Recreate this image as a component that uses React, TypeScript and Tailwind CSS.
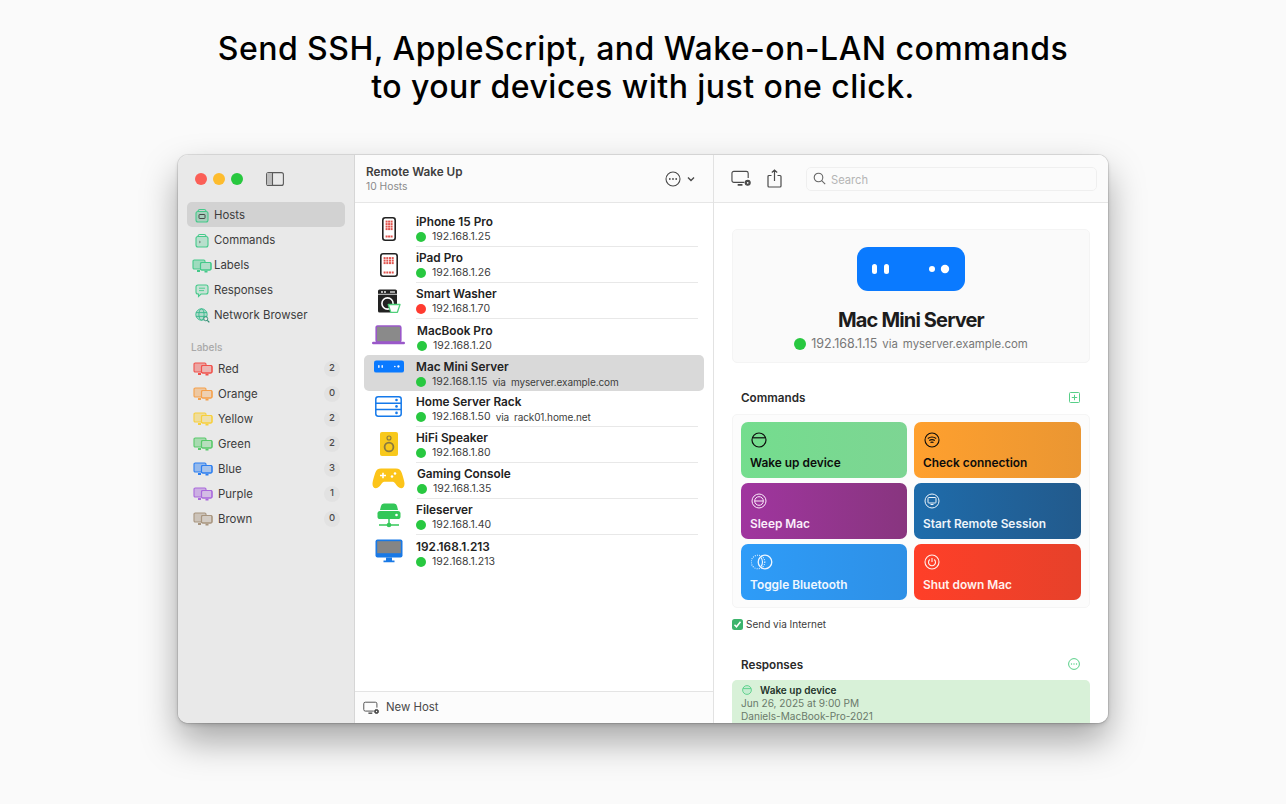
import type { ReactNode } from "react";

const font = { fontFamily: "Inter, 'Liberation Sans', sans-serif" };

function MonitorPair({ className }: { className: string }) {
  return (
    <svg viewBox="0 0 20 14" className={`w-[20px] h-[14px] ${className}`} fill="none" stroke="currentColor">
      <rect x="1" y="1" width="12" height="9" rx="1.2" fill="currentColor" fillOpacity="0.45" strokeWidth="1.1" />
      <rect x="8.5" y="3.5" width="10.5" height="7.5" rx="1.2" fill="#eaeaea" strokeWidth="1.1" />
      <rect x="8.5" y="3.5" width="10.5" height="7.5" rx="1.2" fill="currentColor" fillOpacity="0.35" strokeWidth="1.1" />
      <path d="M5 12h3M12.5 12.6h3" strokeWidth="1.8" />
    </svg>
  );
}

function HostsIcon({ inner }: { inner?: boolean }) {
  return (
    <svg viewBox="0 0 14 16" className="w-[14px] h-[16px] text-[#45c98a]" fill="none" stroke="currentColor">
      <path d="M3 3.5C3 2 4 1.5 5 1.5h4c1 0 2 .5 2 2" strokeWidth="1.1" />
      <rect x="1" y="3.5" width="12" height="10.5" rx="2" fill="currentColor" fillOpacity="0.3" strokeWidth="1.1" />
      {inner ? (
        <rect x="4" y="6.5" width="6" height="4" rx="0.6" strokeWidth="0.9" stroke="#3a3a3a" />
      ) : (
        <path d="M4 8l1.5 1L4 10" strokeWidth="0.7" stroke="#666" />
      )}
    </svg>
  );
}

function BubbleIcon() {
  return (
    <svg viewBox="0 0 14 14" className="w-[14px] h-[14px] text-[#45c98a]" fill="none" stroke="currentColor" strokeWidth="1.1">
      <path d="M3 1h8a2 2 0 012 2v5a2 2 0 01-2 2H6l-2.5 2.5V10H3a2 2 0 01-2-2V3a2 2 0 012-2z" fill="currentColor" fillOpacity="0.2" />
      <path d="M4 4.2h6M4 6.6h5" strokeWidth="0.9" />
    </svg>
  );
}

function GlobeIcon() {
  return (
    <svg viewBox="0 0 15 15" className="w-[15px] h-[15px] text-[#35b98a]" fill="none" stroke="currentColor" strokeWidth="0.9">
      <circle cx="6.5" cy="6.5" r="5.7" fill="currentColor" fillOpacity="0.3" />
      <ellipse cx="6.5" cy="6.5" rx="2.6" ry="5.7" />
      <path d="M1 4.6h11M1 8.4h11" />
      <circle cx="10.8" cy="10.8" r="2" fill="#eaeaea" stroke="#2c8c70" />
      <path d="M12.3 12.3l2 2" stroke="#2c8c70" strokeWidth="1.2" />
    </svg>
  );
}

function MonitorGear({ className }: { className: string }) {
  return (
    <svg viewBox="0 0 22 17" className={className} fill="none" stroke="#4a4a4a" strokeWidth="1.2">
      <path d="M14 12.5H3a2 2 0 01-2-2V3a2 2 0 012-2h13a2 2 0 012 2v5" />
      <path d="M7 15.2h5" strokeWidth="1.8" />
      <circle cx="17.5" cy="13" r="2.6" fill="#4a4a4a" stroke="#4a4a4a" />
      <circle cx="17.5" cy="13" r="0.9" fill="#fff" stroke="none" />
    </svg>
  );
}

function PhoneIcon({ wide }: { wide?: boolean }) {
  const w = wide ? 18 : 14;
  const cols = wide ? [4.5, 7.2, 9.9, 12.6] : [4.5, 7, 9.5];
  const rows = wide ? [5, 7.5, 10] : [4.5, 7, 9.5, 12];
  return (
    <svg viewBox={`0 0 ${w} 24`} width={w} height="24" fill="none">
      <rect x="0.8" y="0.8" width={w - 1.6} height="22.4" rx="2.4" fill="#fff" stroke="#222" strokeWidth="1.6" />
      {rows.flatMap((y) => cols.map((x) => <rect key={`${x}-${y}`} x={x - 0.9} y={y - 0.9} width="2" height="2" fill="#e2554f" />))}
      {cols.map((x) => <rect key={x} x={x - 0.9} y="18.5" width="2" height="2" fill="#e2554f" />)}
    </svg>
  );
}

function WasherIcon() {
  return (
    <svg width="24" height="25" viewBox="0 0 24 25">
      <rect x="1" y="0.5" width="19" height="23" rx="1.6" fill="#222" />
      <path d="M1 5.3h19" stroke="#fff" strokeWidth="0.8" />
      <circle cx="5" cy="3" r="0.9" fill="#fff" />
      <circle cx="8" cy="3" r="0.9" fill="#fff" />
      <path d="M13 3h5" stroke="#fff" strokeWidth="1.2" />
      <circle cx="10.5" cy="14.5" r="5.6" fill="#222" stroke="#fff" strokeWidth="1.6" />
      <path d="M11.2 15.5h11.8l-2.6 7.8h-6.6z" fill="#fff" stroke="#4fd07a" strokeWidth="1.3" strokeLinejoin="round" />
    </svg>
  );
}

function LaptopIcon() {
  return (
    <svg width="33" height="20" viewBox="0 0 33 20">
      <rect x="4.2" y="1" width="24.600" height="16" rx="1.4" fill="#8a8a8a" stroke="#9a58c9" strokeWidth="1.6" />
      <rect x="0" y="16.8" width="33" height="2.4" rx="1.2" fill="#9a58c9" />
    </svg>
  );
}

function MiniIcon({ className, big }: { className: string; big?: boolean }) {
  return (
    <svg viewBox="0 0 108 44" className={className}>
      <rect width="108" height="44" rx={big ? 11 : 8} fill="#0a7aff" />
      <rect x="15" y="17" width="5" height="10" rx="2.5" fill="#fff" />
      <rect x="27" y="17" width="5" height="10" rx="2.5" fill="#fff" />
      <circle cx="75" cy="22" r="3" fill="#fff" />
      <circle cx="88" cy="22" r="4.2" fill="#fff" />
    </svg>
  );
}

function RackIcon() {
  return (
    <svg width="27" height="21" viewBox="0 0 27 21" fill="#fff" stroke="#1479ea" strokeWidth="1.5">
      <rect x="0.8" y="0.8" width="25.4" height="19.4" rx="2.4" />
      <path d="M1 7.2h25M1 13.6h25" />
      <g fill="#1479ea" stroke="none">
        <circle cx="21.5" cy="4" r="1.3" />
        <circle cx="21.5" cy="10.4" r="1.3" />
        <circle cx="21.5" cy="16.9" r="1.3" />
      </g>
    </svg>
  );
}

function SpeakerIcon() {
  return (
    <svg width="18" height="24" viewBox="0 0 18 24">
      <rect width="18" height="24" rx="2" fill="#f8c91c" />
      <circle cx="9" cy="6" r="2" fill="#f8c91c" stroke="#8a7a40" strokeWidth="1.1" />
      <circle cx="9" cy="15" r="4.4" fill="#f8c91c" stroke="#8a7a40" strokeWidth="1.8" />
    </svg>
  );
}

function GamepadIcon() {
  return (
    <svg width="33" height="21" viewBox="0 0 33 21">
      <path d="M9 0.5h15c3 0 4.8 1.4 5.8 4.4 1.2 3.6 2.4 7.4 2.7 10.4.3 3-1.4 5-3.4 5-2.4 0-4-2.4-6-5-1-1.2-1.8-1.6-3-1.6h-7.200c-1.200 0-2 .4-3 1.600-2 2.600-3.600 5-6 5-2 0-3.700-2-3.400-5 .3-3 1.500-6.800 2.700-10.400C4.200 1.900 6 .5 9 .5z" fill="#fcc419" />
      <path d="M8 7.500h6M11 4.800v5.400" stroke="#fff" strokeWidth="1.600" />
      <circle cx="23" cy="5.500" r="1.300" fill="#fff" />
      <circle cx="20" cy="8.500" r="1.300" fill="#fff" />
    </svg>
  );
}

function FileserverIcon() {
  return (
    <svg width="24" height="25" viewBox="0 0 24 25">
      <path d="M7 0.500h10a3 3 0 013 2.500L21 7H3l1-4a3 3 0 013-2.500z" fill="#34c759" />
      <rect x="0.500" y="8" width="23" height="8" rx="2.600" fill="#34c759" />
      <circle cx="19.500" cy="12" r="1.300" fill="#fff" />
      <path d="M12 16v6M2 22h20" stroke="#34c759" strokeWidth="1.500" />
      <circle cx="12" cy="22" r="2.300" fill="#34c759" />
    </svg>
  );
}

function IMacIcon() {
  return (
    <svg width="28" height="24" viewBox="0 0 28 24">
      <rect x="0.500" y="0.500" width="27" height="18" rx="2" fill="#1979e6" />
      <rect x="2.200" y="2.200" width="23.600" height="12" fill="#858585" />
      <path d="M11 18.500h6v3h2.500v1.800h-11v-1.800H11z" fill="#1979e6" />
    </svg>
  );
}

type Host = { name: string; ip: string; via?: string; icon: ReactNode; lift?: string; status?: string; wide?: boolean };

const hosts: Host[] = [
  { name: "iPhone 15 Pro", ip: "192.168.1.25", icon: <PhoneIcon />, lift: "mb-[1px]" },
  { name: "iPad Pro", ip: "192.168.1.26", icon: <PhoneIcon wide /> },
  { name: "Smart Washer", ip: "192.168.1.70", icon: <WasherIcon />, status: "bg-[#ff3b30]" },
  { name: "MacBook Pro", ip: "192.168.1.20", icon: <LaptopIcon />, lift: "mb-[4px]", wide: true },
  { name: "Mac Mini Server", ip: "192.168.1.15", via: "myserver.example.com", icon: <MiniIcon className="w-[30px] h-[13px]" />, lift: "mb-[14px]" },
  { name: "Home Server Rack", ip: "192.168.1.50", via: "rack01.home.net", icon: <RackIcon />, lift: "mb-[6px]" },
  { name: "HiFi Speaker", ip: "192.168.1.80", icon: <SpeakerIcon />, lift: "mb-[3px]" },
  { name: "Gaming Console", ip: "192.168.1.35", icon: <GamepadIcon />, lift: "mb-[6px]", wide: true },
  { name: "Fileserver", ip: "192.168.1.40", icon: <FileserverIcon />, lift: "mb-[3px]" },
  { name: "192.168.1.213", ip: "192.168.1.213", icon: <IMacIcon />, lift: "mb-[5px]" },
];

const labels = [
  { name: "Red", count: 2, color: "text-[#f0524c]" },
  { name: "Orange", count: 0, color: "text-[#f5a04a]" },
  { name: "Yellow", count: 2, color: "text-[#f7cf3c]" },
  { name: "Green", count: 2, color: "text-[#58c96a]" },
  { name: "Blue", count: 3, color: "text-[#2c7ff0]" },
  { name: "Purple", count: 1, color: "text-[#a968dc]" },
  { name: "Brown", count: 0, color: "text-[#a8957f]" },
];

function CmdGlyph({ kind }: { kind: string }) {
  if (kind === "wake") {
    return (
      <svg width="16" height="16" viewBox="0 0 16 16" fill="none" stroke="currentColor" strokeWidth="1.200">
        <circle cx="8" cy="8" r="7" />
        <path d="M1.500 5.800h13" />
      </svg>
    );
  }
  if (kind === "wifi") {
    return (
      <svg width="16" height="16" viewBox="0 0 16 16" fill="none" stroke="currentColor" strokeWidth="1.100">
        <circle cx="8" cy="8" r="7" />
        <path d="M3.800 6.500c2.500-1.800 5.900-1.800 8.400 0M5.200 8.500c1.700-1.100 3.900-1.100 5.600 0M6.500 10.500c.9-.5 2.100-.5 3 0" />
      </svg>
    );
  }
  if (kind === "sleep") {
    return (
      <svg width="16" height="16" viewBox="0 0 16 16" fill="none" stroke="currentColor" strokeWidth="1">
        <circle cx="8" cy="8" r="7" />
        <circle cx="8" cy="8" r="4.300" />
        <path d="M3.800 8h8.400" />
      </svg>
    );
  }
  if (kind === "remote") {
    return (
      <svg width="16" height="16" viewBox="0 0 16 16" fill="none" stroke="currentColor" strokeWidth="1">
        <circle cx="8" cy="8" r="7" />
        <rect x="4" y="4.500" width="8" height="5.500" rx="0.800" />
        <path d="M6.500 11.500h3" />
      </svg>
    );
  }
  if (kind === "bt") {
    return (
      <svg width="22" height="16" viewBox="0 0 22 16" fill="none" stroke="currentColor" strokeWidth="1.100">
        <circle cx="7" cy="8" r="6.800" strokeDasharray="1 1.200" />
        <circle cx="14" cy="8" r="6.800" strokeWidth="1.300" />
        <path d="M10 3.500c2 2.500 2 6.500 0 9" />
      </svg>
    );
  }
  return (
    <svg width="16" height="16" viewBox="0 0 16 16" fill="none" stroke="currentColor" strokeWidth="1.100">
      <circle cx="8" cy="8" r="7" />
      <path d="M5.800 5.500a3.500 3.500 0 104.400 0M8 4v4" />
    </svg>
  );
}

const commands = [
  { title: "Wake up device", kind: "wake", tone: "from-[#74dd8e] to-[#7dd593] text-[#0c0c0c]" },
  { title: "Check connection", kind: "wifi", tone: "from-[#ffa02e] to-[#ea9632] text-[#0c0c0c]" },
  { title: "Sleep Mac", kind: "sleep", tone: "from-[#a0359f] to-[#88357f] text-[#fbeefb]" },
  { title: "Start Remote Session", kind: "remote", tone: "from-[#1e6cab] to-[#225a8c] text-[#eef4fa]" },
  { title: "Toggle Bluetooth", kind: "bt", tone: "from-[#2e9cf8] to-[#2e90e6] text-[#f0f7ff]" },
  { title: "Shut down Mac", kind: "power", tone: "from-[#ff3f28] to-[#e6412a] text-[#fff1ee]" },
];

function Sidebar() {
  const nav: { name: string; icon: ReactNode; active?: boolean }[] = [
    { name: "Hosts", icon: <HostsIcon inner />, active: true },
    { name: "Commands", icon: <HostsIcon /> },
    { name: "Labels", icon: <MonitorPair className="text-[#45c98a]" /> },
    { name: "Responses", icon: <BubbleIcon /> },
    { name: "Network Browser", icon: <GlobeIcon /> },
  ];
  return (
    <div className="w-[177px] shrink-0 bg-[#e9e9e9] border-r border-[#d6d6d6]">
      <div className="h-[47px] flex items-center pl-[17px]">
        <span className="w-[12px] h-[12px] rounded-full bg-[#fb5f57]" />
        <span className="w-[12px] h-[12px] rounded-full bg-[#fdbc2e] ml-[6px]" />
        <span className="w-[12px] h-[12px] rounded-full bg-[#28c83f] ml-[6px]" />
        <svg width="18" height="14" viewBox="0 0 18 14" fill="none" stroke="#5a5a5a" strokeWidth="1.100" className="ml-[23px]">
          <rect x="0.600" y="0.600" width="16.800" height="12.800" rx="2" />
          <rect x="1" y="1" width="5.500" height="12" fill="#bdbdbd" stroke="none" />
          <path d="M6.500 1v12" />
        </svg>
      </div>
      <div className="px-[9px]">
        {nav.map((n) => (
          <div
            key={n.name}
            className={`relative h-[25px] flex items-center pl-[27px] pt-[2px] rounded-[5px] text-[11.4px] text-[#3c3c3c] ${n.active ? "bg-[#d2d2d2]" : ""}`}
          >
            <span className="absolute left-[1px] w-[28px] flex justify-center">{n.icon}</span>
            {n.name}
          </div>
        ))}
      </div>
      <div className="mt-[9px] h-[20px] pl-[13px] pt-[2px] flex items-center text-[10px] font-medium text-[#a8a8a8]">Labels</div>
      <div className="px-[9px]">
        {labels.map((l) => (
          <div key={l.name} className="h-[25px] flex items-center pl-[6px] pr-[5px] text-[11.4px] text-[#3c3c3c]">
            <MonitorPair className={l.color} />
            <span className="ml-[5px] pt-[2px]">{l.name}</span>
            <span className="ml-auto w-[16px] h-[16px] rounded-full bg-[#e2e2e2] flex items-center justify-center text-[9.5px] font-medium text-[#4a4a4a]">
              {l.count}
            </span>
          </div>
        ))}
      </div>
    </div>
  );
}

function HostList() {
  return (
    <div className="w-[359px] shrink-0 flex flex-col bg-white border-r border-[#e2e2e2]">
      <div className="h-[48px] shrink-0 bg-[#fbfbfb] border-b border-[#e6e6e6] flex items-center pl-[11px] pr-[16px]">
        <div>
          <div className="text-[11.75px] leading-[15px] font-semibold text-[#3e3e3e] pt-[1px]">Remote Wake Up</div>
          <div className="text-[10.3px] leading-[13px] text-[#8a8a8a]">10 Hosts</div>
        </div>
        <svg width="32" height="16" viewBox="0 0 32 16" fill="none" stroke="#4a4a4a" strokeWidth="1.100" className="ml-auto">
          <circle cx="8" cy="8" r="7" />
          <circle cx="4.800" cy="8" r="0.900" fill="#4a4a4a" stroke="none" />
          <circle cx="8" cy="8" r="0.900" fill="#4a4a4a" stroke="none" />
          <circle cx="11.200" cy="8" r="0.900" fill="#4a4a4a" stroke="none" />
          <path d="M23 6.500l3 3 3-3" strokeWidth="1.400" />
        </svg>
      </div>
      <div className="flex-1 pt-[8px] px-[9px]">
        {hosts.map((h, i) => {
          const active = h.name === "Mac Mini Server";
          return (
            <div key={h.name} className={`h-[36px] flex items-center pl-[8px] rounded-[5px] ${active ? "bg-[#d9d9d9]" : ""}`}>
              <div className={`w-[33px] flex justify-center shrink-0 ${h.lift ?? ""}`}>{h.icon}</div>
              <div
                className={`${h.wide ? "ml-[12px]" : "ml-[11px]"} flex-1 h-full mr-[6px] pt-[1px] flex flex-col justify-center ${
                  active || i === hosts.length - 1 || hosts[i + 1]?.name === "Mac Mini Server" ? "" : "border-b border-[#e8e8e8]"
                }`}
              >
                <div className="text-[11.8px] leading-[16px] font-semibold text-[#222]">{h.name}</div>
                <div className="flex items-center text-[10.5px] leading-[14px] text-[#3d3d3d]">
                  <span className={`w-[10px] h-[10px] rounded-full ${h.status ?? "bg-[#28c840]"}`} />
                  <span className="ml-[6px]">{h.ip}</span>
                  {h.via && <span className="ml-[5px] text-[10px] tracking-[-0.1px]">via</span>}
                  {h.via && <span className="ml-[5px] text-[10px] tracking-[-0.1px]">{h.via}</span>}
                </div>
              </div>
            </div>
          );
        })}
      </div>
      <div className="h-[32px] shrink-0 bg-[#fcfcfc] border-t border-[#e4e4e4] flex items-center pl-[8px] text-[11.4px] text-[#4a4a4a]">
        <MonitorGear className="w-[17px] h-[14px]" />
        <span className="ml-[6px]">New Host</span>
      </div>
    </div>
  );
}

function Detail() {
  return (
    <div className="flex-1 min-w-0 flex flex-col bg-white overflow-hidden">
      <div className="h-[48px] shrink-0 bg-[#fbfbfb] border-b border-[#e6e6e6] flex items-center pl-[17px]">
        <MonitorGear className="w-[21px] h-[17px]" />
        <svg width="15" height="19" viewBox="0 0 15 19" fill="none" stroke="#4a4a4a" strokeWidth="1.200" className="ml-[15px]">
          <path d="M4.500 6.500H2a1 1 0 00-1 1v9.500a1 1 0 001 1h11a1 1 0 001-1V7.500a1 1 0 00-1-1h-2.500M7.500 12V1M4.800 3.500L7.500 1l2.700 2.500" />
        </svg>
        <div className="ml-[24px] w-[291px] h-[24px] rounded-[5px] bg-[#fbfbfb] border border-[#efefef] flex items-center pl-[6px] text-[11.2px] text-[#b5b5b5]">
          <svg width="13" height="13" viewBox="0 0 13 13" fill="none" stroke="#666" strokeWidth="1.100">
            <circle cx="5.500" cy="5.500" r="4.300" />
            <path d="M8.700 8.700l3.500 3.500" />
          </svg>
          <span className="ml-[5px] pt-[3px]">Search</span>
        </div>
      </div>
      <div className="px-[18px] pt-[26px]">
        <div className="h-[134px] rounded-[5px] bg-[#fafafa] border border-[#f4f4f4] flex flex-col items-center pt-[17px]">
          <MiniIcon big className="w-[108px] h-[44px]" />
          <div className="mt-[16px] text-[20px] leading-[26px] font-bold tracking-[-0.85px] text-[#1c1c1c]">Mac Mini Server</div>
          <div className="mt-[3px] flex items-center text-[12.5px] leading-[16px] text-[#777]">
            <span className="w-[12px] h-[12px] rounded-full bg-[#28c840]" />
            <span className="ml-[5px]">192.168.1.15</span>
            <span className="ml-[5px] text-[11.4px]">via</span>
            <span className="ml-[5px] text-[11.4px]">myserver.example.com</span>
          </div>
        </div>
        <div className="mt-[24px] h-[20px] pl-[9px] pr-[10px] flex items-center justify-between">
          <span className="text-[11.7px] font-semibold text-[#2a2a2a] pt-[3px]">Commands</span>
          <svg width="11" height="11" viewBox="0 0 11 11" fill="none" stroke="#58cf88" strokeWidth="1">
            <rect x="0.500" y="0.500" width="10" height="10" rx="1" />
            <path d="M5.500 2.800v5.400M2.800 5.500h5.400" />
          </svg>
        </div>
        <div className="mt-[7px] py-[7px] px-[8px] rounded-[5px] bg-[#fcfcfc] border border-[#f5f5f5] grid grid-cols-[166px_167px] gap-x-[7px] gap-y-[5px]">
          {commands.map((c) => (
            <div key={c.title} className={`h-[56px] rounded-[7px] bg-linear-to-r ${c.tone} pl-[9px] pt-[10px] flex flex-col`}>
              <div className="h-[16px] pl-[1px]">
                <CmdGlyph kind={c.kind} />
              </div>
              <div className="mt-[7px] text-[11.9px] leading-[16px] font-semibold">{c.title}</div>
            </div>
          ))}
        </div>
        <div className="mt-[8px] h-[16px] flex items-center text-[10px] text-[#3c3c3c]">
          <span className="w-[11px] h-[11px] rounded-[2.5px] bg-[#3cb46c] flex items-center justify-center">
            <svg width="9" height="9" viewBox="0 0 9 9" fill="none" stroke="#fff" strokeWidth="1.500">
              <path d="M1.500 4.800l2 2 4-5" />
            </svg>
          </span>
          <span className="ml-[3px]">Send via Internet</span>
        </div>
        <div className="mt-[22px] h-[20px] pl-[9px] pr-[10px] flex items-center justify-between">
          <span className="text-[11.7px] font-semibold text-[#2a2a2a] pt-[3px]">Responses</span>
          <svg width="12" height="12" viewBox="0 0 12 12" fill="none" stroke="#58cf88" strokeWidth="1">
            <circle cx="6" cy="6" r="5.400" />
            <circle cx="3.500" cy="6" r="0.700" fill="#58cf88" stroke="none" />
            <circle cx="6" cy="6" r="0.700" fill="#58cf88" stroke="none" />
            <circle cx="8.500" cy="6" r="0.700" fill="#58cf88" stroke="none" />
          </svg>
        </div>
        <div className="mt-[6px] h-[43px] rounded-t-[5px] bg-[#d8f1d8] pl-[9px] pt-[3px] text-[10.1px] leading-[13px] text-[#6a7a6a]">
          <div className="flex items-center h-[14px] font-semibold text-[#22332a] text-[10px]">
            <svg width="10" height="10" viewBox="0 0 10 10" fill="none" stroke="#58cf88" strokeWidth="0.900" className="ml-[1px]">
              <circle cx="5" cy="5" r="4.400" fill="#c4ecd0" />
              <path d="M1 3.600h8" />
            </svg>
            <span className="ml-[8px]">Wake up device</span>
          </div>
          <div>Jun 26, 2025 at 9:00 PM</div>
          <div>Daniels-MacBook-Pro-2021</div>
        </div>
      </div>
    </div>
  );
}

export default function App() {
  return (
    <div className="w-[1286px] h-[804px] overflow-hidden bg-[#fafafa] flex flex-col items-center" style={font}>
      <div className="pt-[30px] h-[155px] text-center text-[32px] leading-[38px] font-[550] tracking-[0.46px] text-black">
        <div>Send SSH, AppleScript, and Wake-on-LAN commands</div>
        <div>to your devices with just one click.</div>
      </div>
      <div className="w-[930px] h-[568px] flex rounded-[10px] overflow-hidden shadow-[0_0_0_1px_rgba(0,0,0,0.09),0_2px_4px_rgba(0,0,0,0.14),0_18px_36px_rgba(0,0,0,0.34)]">
        <Sidebar />
        <HostList />
        <Detail />
      </div>
    </div>
  );
}
